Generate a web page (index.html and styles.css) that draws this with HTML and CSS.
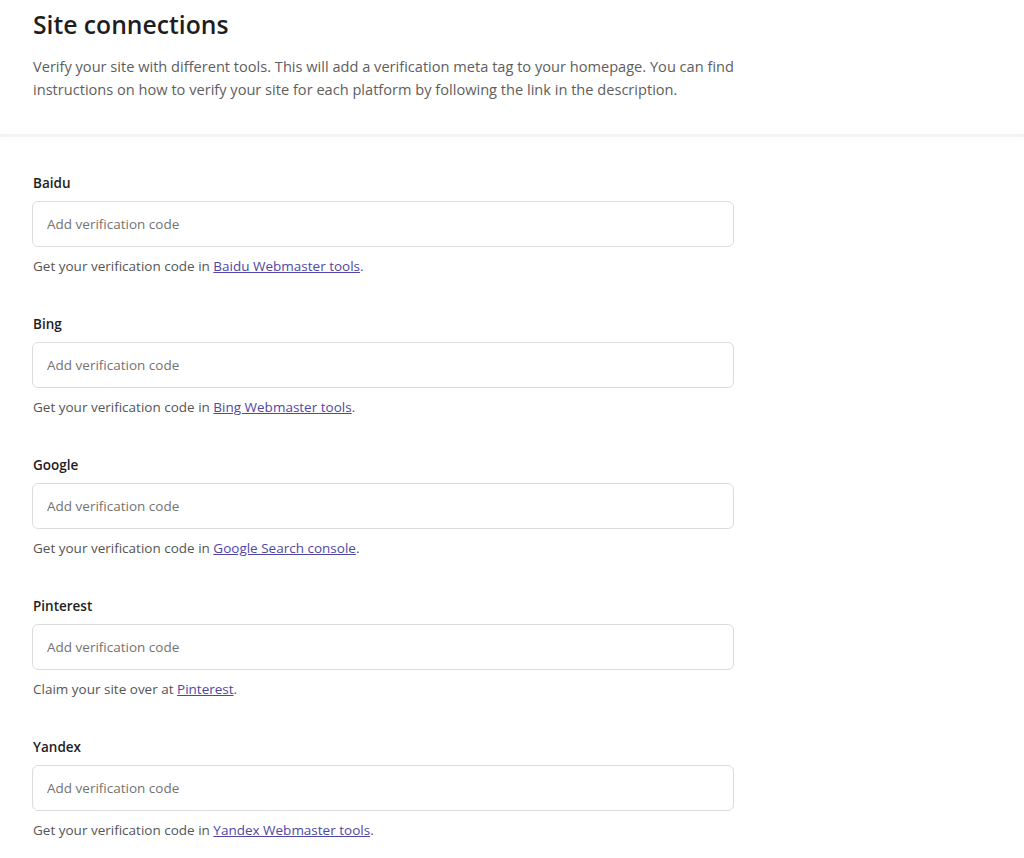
FILE: index.html
```html
<!DOCTYPE html>
<html lang="en">
<head>
<meta charset="utf-8">
<title>Site connections</title>
<link rel="stylesheet" href="styles.css">
</head>
<body>
<header class="header">
  <h1 class="title">Site connections</h1>
  <p class="intro">Verify your site with different tools. This will add a verification meta tag to your homepage. You can find instructions on how to verify your site for each platform by following the link in the description.</p>
</header>
<div class="divider"></div>
<form class="fields">
  <div class="field">
    <label class="label" for="baidu">Baidu</label>
    <input class="input" id="baidu" type="text" placeholder="Add verification code">
    <p class="help">Get your verification code in <a href="#">Baidu Webmaster tools</a>.</p>
  </div>
  <div class="field">
    <label class="label" for="bing">Bing</label>
    <input class="input" id="bing" type="text" placeholder="Add verification code">
    <p class="help">Get your verification code in <a href="#">Bing Webmaster tools</a>.</p>
  </div>
  <div class="field">
    <label class="label" for="google">Google</label>
    <input class="input" id="google" type="text" placeholder="Add verification code">
    <p class="help">Get your verification code in <a href="#">Google Search console</a>.</p>
  </div>
  <div class="field">
    <label class="label" for="pinterest">Pinterest</label>
    <input class="input" id="pinterest" type="text" placeholder="Add verification code">
    <p class="help">Claim your site over at <a href="#">Pinterest</a>.</p>
  </div>
  <div class="field">
    <label class="label" for="yandex">Yandex</label>
    <input class="input" id="yandex" type="text" placeholder="Add verification code">
    <p class="help">Get your verification code in <a href="#">Yandex Webmaster tools</a>.</p>
  </div>
</form>
</body>
</html>
```
FILE: styles.css
```css
html, body {
  margin: 0;
  padding: 0;
  background: #ffffff;
}
body {
  font-family: "Open Sans", "Noto Sans", sans-serif;
  color: #1e1e1e;
  overflow: hidden;
}
.header {
  padding: 8px 33px 0 33px;
}
.title {
  margin: 0;
  font-size: 24.7px;
  line-height: 34px;
  font-weight: 600;
  color: #1e1e1e;
}
.intro {
  margin: 13px 0 0 0;
  width: 720px;
  font-size: 14.6px;
  line-height: 23px;
  color: #5e5e5e;
}
.divider {
  margin-top: 33px;
  height: 3px;
  background: #f3f3f3;
  box-shadow: 0 -4px 4px #fbfbfb, 0 4px 4px #fbfbfb;
}
.fields {
  display: flex;
  flex-direction: column;
  gap: 38px;
  padding: 36px 0 0 32px;
}
.field {
  display: flex;
  flex-direction: column;
  width: 702px;
}
.label {
  margin-left: 1px;
  font-size: 13.5px;
  line-height: 20px;
  font-weight: 600;
  color: #1e1e1e;
}
.input {
  margin-top: 8px;
  box-sizing: border-box;
  height: 46px;
  width: 702px;
  padding: 0 14px;
  border: 1px solid #dcdcdc;
  border-radius: 6px;
  font-family: inherit;
  font-size: 13.5px;
  color: #1e1e1e;
  background: #fff;
  outline: none;
}
.input::placeholder {
  color: #737373;
}
.help {
  margin: 9px 0 0 1px;
  font-size: 13.5px;
  line-height: 20px;
  color: #555555;
}
.help a {
  color: #4f46a5;
  text-decoration: underline;
}
```
